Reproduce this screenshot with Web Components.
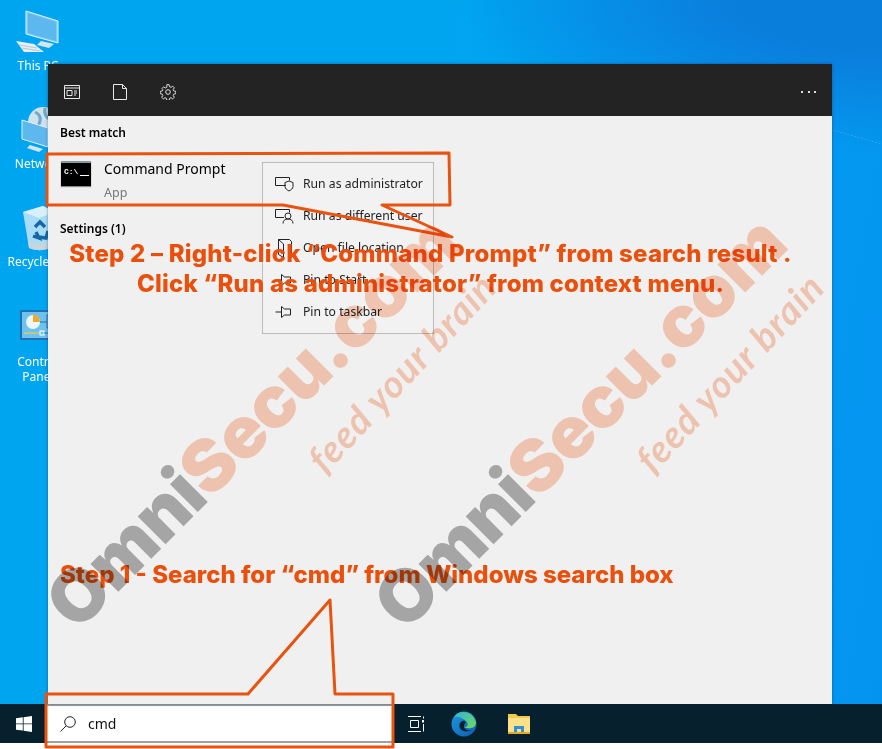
<!DOCTYPE html>
<html>
<head>
<meta charset="utf-8">
<title>Run cmd as administrator</title>
<style>
  html, body { margin: 0; padding: 0; background: #fff; }
  body { width: 882px; height: 749px; overflow: hidden; font-family: "Noto Sans", "Open Sans", sans-serif; }
</style>
</head>
<body>
<win-screen>
  <desktop-icon slot="icons" style="left:9px;top:10px" label="This PC" kind="pc"></desktop-icon>
  <desktop-icon slot="icons" style="left:10px;top:105px" label="Network" kind="net"></desktop-icon>
  <desktop-icon slot="icons" style="left:10px;top:203px" label="Recycle Bin" kind="bin"></desktop-icon>
  <desktop-icon slot="icons" style="left:9px;top:308px" label="Control Panel" kind="cp"></desktop-icon>

  <search-panel slot="panel"></search-panel>
  <task-bar slot="taskbar"></task-bar>

  <step-callouts slot="over"></step-callouts>
  <step-note slot="over" style="left:0;top:239px;width:861px;letter-spacing:.2px">Step 2 – Right-click “Command Prompt” from search result .<br>Click “Run as administrator” from context menu.</step-note>
  <step-note slot="over" style="left:60px;top:560px">Step 1 - Search for “cmd” from Windows search box</step-note>

  <omni-mark slot="over" style="left:84px;top:640px"></omni-mark>
  <omni-mark slot="over" style="left:412px;top:640px"></omni-mark>
</win-screen>

<script>
const screenTpl = document.createElement('template');
screenTpl.innerHTML = `
  <style>
    :host { display: flex; flex-direction: column; position: relative; width: 882px; height: 749px; overflow: hidden; background: #fff; }
    .desk {
      position: relative; height: 704px; box-sizing: border-box; padding: 64px 50px 0 48px; display: flex;
      background:
        linear-gradient(16deg, transparent 0 49%, rgba(255,255,255,.2) 50%, transparent 51%) 832px 122px / 50px 30px no-repeat,
        radial-gradient(ellipse 420px 150px at 100% 0, #0a7edb 0 35%, rgba(10,126,219,0) 100%),
        linear-gradient(100deg, #00a5f0 0 45%, #0494f0 100%);
    }
    ::slotted(search-panel) { position: relative; flex: 1; }
  </style>
  <div class="desk">
    <slot name="icons"></slot>
    <slot name="panel"></slot>
  </div>
  <slot name="taskbar"></slot>
  <slot name="over"></slot>
`;
class WinScreen extends HTMLElement {
  constructor() {
    super();
    this.attachShadow({ mode: 'open' }).appendChild(screenTpl.content.cloneNode(true));
  }
}

const iconArt = {
  pc: `<svg width="46" height="44" viewBox="0 0 46 44">
        <path d="M13 1 L45 11 V33 L13 24Z" fill="#7cc9f5" stroke="#dff2fd" stroke-width="1"/>
        <path d="M15 3 L43 12 V31 L15 23Z" fill="#5cb8ee"/>
        <path d="M28 31 L41 34 L36 38 L24 35Z" fill="#d6e6ef"/>
        <path d="M6 33 L24 36 L34 44 L14 44 Z" fill="#e8f0f5" transform="translate(-3,-2)"/>
        <path d="M6 35 L24 38 M8 38 L28 41" stroke="#b4c6d2" stroke-width="1"/>
      </svg>`,
  net: `<svg width="44" height="48" viewBox="0 0 44 48">
        <circle cx="28" cy="17" r="15" fill="#cfe2ee"/>
        <path d="M20 7 q8 4 4 12 t10 8 M30 3 q-2 8 6 12" stroke="#6fa9cc" stroke-width="3" fill="none"/>
        <path d="M7 15 L33 23 V42 L7 34Z" fill="#5cb8ee" stroke="#dff2fd"/>
        <path d="M15 40 L28 44 L24 47 L12 43Z" fill="#d6e6ef"/>
      </svg>`,
  bin: `<svg width="44" height="50" viewBox="0 0 44 50">
        <path d="M8 9 L28 3 L40 9 L38 44 Q26 50 14 45Z" fill="#a9dcf6"/>
        <path d="M8 9 L28 3 L40 9 L24 15Z" fill="#d9f0fb"/>
        <path d="M13 38 Q26 44 38 36 L38 44 Q26 50 14 45Z" fill="#c6d6dc"/>
        <path d="M20 24 l5 -5 l5 5 M33 28 l-2 7 l-7 -1 M21 29 l3 6 l-6 -2" stroke="#1467a8" stroke-width="3.4" fill="none"/>
      </svg>`,
  cp: `<svg width="44" height="44" viewBox="0 0 44 44">
        <rect x="6" y="2" width="38" height="30" fill="#1f73b4"/>
        <rect x="8" y="4" width="36" height="26" fill="#6ec3ee"/>
        <circle cx="19" cy="14" r="7" fill="#eef7fc"/>
        <path d="M19 14 V6.500 A7 7 0 0 1 26 14Z" fill="#f3a72b"/>
        <path d="M10 25 H26" stroke="#dcc66a" stroke-width="1.500"/>
        <rect x="26" y="23" width="4" height="4" fill="none" stroke="#fff"/>
        <path d="M26 14 H33 V7 H44 M33 14 V20 H44 M30 25 H38 V20" stroke="#1f73b4" fill="none"/>
      </svg>`
};
const labelGap = { pc: -1, net: 2, bin: 2, cp: -3 };
class DesktopIcon extends HTMLElement {
  constructor() {
    super();
    this.attachShadow({ mode: 'open' });
  }
  connectedCallback() {
    const kind = this.getAttribute('kind');
    this.shadowRoot.innerHTML = `
      <style>
        :host { position: absolute; display: flex; flex-direction: column; align-items: center; width: 58px; gap: 1px;
                color: #fff; font: 12px/15px "Noto Sans", sans-serif; text-align: center; }
        svg { display: block; margin-left: -4px; }
        .art { height: 48px; }
        .txt { margin-top: ${labelGap[kind]}px; ${kind === 'bin' ? 'white-space: nowrap;' : ''} }
      </style>
      <div class="art">${iconArt[kind]}</div>
      <div class="txt">${this.getAttribute('label')}</div>`;
  }
}

const panelTpl = document.createElement('template');
panelTpl.innerHTML = `
  <style>
    :host { display: flex; flex-direction: column; background: #f0f0f0; box-shadow: 0 0 3px rgba(0,40,90,.45); color: #000; }
    .tools { height: 52px; box-sizing: border-box; flex: none; background: #232323; display: flex; align-items: center; padding: 4px 16px 0; gap: 33px; }
    .tools svg { display: block; }
    .dots { margin-left: auto; display: flex; gap: 4.500px; }
    .dots i { width: 2px; height: 2px; background: #ddd; display: block; }
    .body { flex: 1; position: relative; padding-top: 8px; }
    h3 { margin: 0; padding-left: 12px; font: 600 12px/18px "Noto Sans", sans-serif; }
    .hit { display: flex; height: 52px; margin-top: 11px; box-sizing: border-box; padding: 5px 0 0 13px; }
    .cmd { width: 30px; height: 19px; margin-top: 3px; background: #000; border-top: 2px solid #8a969e; box-shadow: 0 1px 1px #888; flex: none; display: flex; gap: 2px; align-items: flex-start; padding-top: 4px; box-sizing: content-box; }
    .cmd b { color: #fff; font: 700 8px/9px "Liberation Mono", monospace; padding-left: 3px; }
    .cmd i { display: block; width: 9px; height: 1px; background: #fff; margin-top: 8px; }
    .names { margin-left: 13px; }
    .name { font-size: 14px; line-height: 21px; }
    .app { font-size: 12.500px; line-height: 18px; color: #777; margin-top: 5px; }
    .settings { margin-top: 15px; }
  </style>
  <div class="tools">
    <svg width="16" height="14" viewBox="0 0 16 14" fill="none" stroke="#e8e8e8">
      <path d="M.5.5h15v13H.5zM.5 3h15M3 5.500h5v5H3zM10 6h3M10 8h3M10 10h2"/>
    </svg>
    <svg width="14" height="16" viewBox="0 0 14 16" fill="none" stroke="#e8e8e8">
      <path d="M.5.5h9l4 4v11H.5zM9.500.5v4h4"/>
    </svg>
    <svg width="16" height="16" viewBox="0 0 24 24" fill="none" stroke="#e8e8e8" stroke-width="1.400">
      <circle cx="12" cy="12" r="3.500"/>
      <path d="M10.300 1h3.400l.6 3 2.200 1 2.600-1.700 2.400 2.400-1.700 2.600 1 2.200 3 .6v3.400l-3 .6-1 2.200 1.700 2.600-2.400 2.400-2.600-1.700-2.200 1-.6 3h-3.400l-.6-3-2.200-1-2.600 1.700-2.400-2.400 1.700-2.600-1-2.200-3-.6v-3.400l3-.6 1-2.200L3 6.700l2.400-2.400L8 6l2.200-1z"/>
    </svg>
    <div class="dots"><i></i><i></i><i></i></div>
  </div>
  <div class="body">
    <h3>Best match</h3>
    <div class="hit">
      <div class="cmd"><b>C:\\</b><i></i></div>
      <div class="names">
        <div class="name">Command Prompt</div>
        <div class="app">App</div>
      </div>
    </div>
    <h3 class="settings">Settings (1)</h3>
    <context-menu></context-menu>
  </div>
`;
class SearchPanel extends HTMLElement {
  constructor() {
    super();
    this.attachShadow({ mode: 'open' }).appendChild(panelTpl.content.cloneNode(true));
  }
}

const menuIcons = {
  admin: '<path d="M11 10.500H.5v-8h14v3M10 7.500l4-1.500 4 1.500v4c0 2-2 3.500-4 4.500-2-1-4-2.500-4-4.500z"/>',
  user: '<path d="M9 10.500H.5v-8h14v3"/><circle cx="13" cy="9" r="3"/><path d="M8 16.500c0-3 2-4.500 5-4.500s5 1.500 5 4.500"/>',
  folder: '<path d="M3.500 15.500V.5h11l2 2v13M3.500 15.500l5 3V5l-5-4.500"/>',
  pin: '<path d="M.5 9h6M6.500 3.500l3 2.500h6v6h-6l-3 2.500z"/>'
};
const menuTpl = document.createElement('template');
menuTpl.innerHTML = `
  <style>
    :host { position: absolute; left: 214px; top: 46px; width: 172px; box-sizing: border-box; padding: 5px 0; display: flex; flex-direction: column;
            border: 1px solid #bcbcbc; background: #f2f2f2; font: 12.200px/32px "Noto Sans", sans-serif; color: #222; }
    .row { height: 32px; display: flex; align-items: center; padding-left: 12px; gap: 9px; white-space: nowrap; }
    svg { flex: none; display: block; width: 19px; height: 19px; fill: none; stroke: #222; }
  </style>
  <div class="row"><svg viewBox="0 0 19 19">${menuIcons.admin}</svg>Run as administrator</div>
  <div class="row"><svg viewBox="0 0 19 19">${menuIcons.user}</svg>Run as different user</div>
  <div class="row"><svg viewBox="0 0 19 19">${menuIcons.folder}</svg>Open file location</div>
  <div class="row"><svg viewBox="0 0 19 19">${menuIcons.pin}</svg>Pin to Start</div>
  <div class="row"><svg viewBox="0 0 19 19">${menuIcons.pin}</svg>Pin to taskbar</div>
`;
class ContextMenu extends HTMLElement {
  constructor() {
    super();
    this.attachShadow({ mode: 'open' }).appendChild(menuTpl.content.cloneNode(true));
  }
}

const barTpl = document.createElement('template');
barTpl.innerHTML = `
  <style>
    :host { display: flex; align-items: center; height: 39px; flex: none; background: #06202e; }
    .start { width: 46px; display: flex; padding-left: 16px; box-sizing: border-box; }
    .box { width: 346px; height: 39px; box-sizing: border-box; border-top: 2px solid #a0a0a0; border-bottom: 2px solid #a0a0a0; background: #fff;
           display: flex; align-items: center; padding: 1px 0 0 14px; gap: 12px; font: 14px/20px "Noto Sans", sans-serif; color: #111; flex: none; }
    .apps { display: flex; align-items: center; margin-left: 16px; }
    svg { display: block; flex: none; }
  </style>
  <div class="start">
    <svg width="16" height="16" viewBox="0 0 16 16" fill="#fff"><path d="M0 2.300l6.800-1V7.500H0zM7.600 1.200L16 0v7.500H7.600zM0 8.300h6.800v6.300L0 13.700zM7.600 8.300H16V16l-8.400-1.200z"/></svg>
  </div>
  <div class="box">
    <svg width="16" height="16" viewBox="0 0 16 16" fill="none" stroke="#222"><circle cx="10" cy="6" r="5.300"/><path d="M6 10L.5 15.500"/></svg>
    <span>cmd</span>
  </div>
  <div class="apps">
    <svg width="16" height="16" viewBox="0 0 16 16" fill="none" stroke="#fff">
      <path d="M0 .5h13M0 15.500h13M2.500 4.500h8v7h-8z"/><path d="M14 4h2v2.500h-2z" fill="#fff" stroke="none"/><path d="M15.500 .5v2M15.500 8v7.500"/>
    </svg>
    <svg width="26" height="26" viewBox="0 0 26 26" style="margin-left:27px">
      <defs>
        <linearGradient id="eb" x1="0" y1="0" x2="1" y2="1"><stop offset="0" stop-color="#1d9ade"/><stop offset="1" stop-color="#0c5db0"/></linearGradient>
        <linearGradient id="eg" x1="0" y1="0" x2="1" y2="1"><stop offset="0" stop-color="#2cb7d8"/><stop offset="1" stop-color="#73d957"/></linearGradient>
      </defs>
      <circle cx="13" cy="13" r="12.500" fill="url(#eb)"/>
      <path d="M3 6C7-1 21-2 25 11c.6 4-3 7-8 6h-4c3-1 5-3 3-6C12 6 6 5 3 6z" fill="url(#eg)"/>
      <path d="M11.500 10c-3 1-4 5-2 8 2 3 7 3 12 1-1 0-5 1-7-1-2-1-2-4 0-6 1-1-1-3-3-2z" fill="#06202e"/>
    </svg>
    <svg width="24" height="22" viewBox="0 0 24 22" style="margin-left:30px">
      <path d="M1 1h8l2 2h12v18H1z" fill="#f2c94c"/>
      <path d="M1 5h22v16H1z" fill="#fbe28a"/>
      <path d="M7 20v-7h10v7h-3v-4h-4v4z" fill="#2f8fd8"/>
      <path d="M1 19h22v2H1z" fill="#e2a92c"/>
    </svg>
  </div>
`;
class TaskBar extends HTMLElement {
  constructor() {
    super();
    this.attachShadow({ mode: 'open' }).appendChild(barTpl.content.cloneNode(true));
  }
}

const calloutTpl = document.createElement('template');
calloutTpl.innerHTML = `
  <style>
    :host { position: absolute; left: 0; top: 0; display: block; width: 882px; height: 749px; pointer-events: none; }
    svg { display: block; }
    polygon { fill: none; stroke: #e8540f; stroke-width: 3; stroke-linejoin: round; }
  </style>
  <svg width="882" height="749">
    <polygon points="47,154 449,153 450,205 382,205 452,237 283,205 47,205"/>
    <polygon points="46,694 248,694 330,600 335,694 393,694 393,747 46,747"/>
  </svg>
`;
class StepCallouts extends HTMLElement {
  constructor() {
    super();
    this.attachShadow({ mode: 'open' }).appendChild(calloutTpl.content.cloneNode(true));
  }
}

const noteTpl = document.createElement('template');
noteTpl.innerHTML = `
  <style>
    :host { position: absolute; display: block; color: #ea500c; font: 800 24px/30px Inter, "Liberation Sans", sans-serif; text-align: center; white-space: nowrap; }
  </style>
  <slot></slot>
`;
class StepNote extends HTMLElement {
  constructor() {
    super();
    this.attachShadow({ mode: 'open' }).appendChild(noteTpl.content.cloneNode(true));
  }
}

const markTpl = document.createElement('template');
markTpl.innerHTML = `
  <style>
    :host { position: absolute; display: block; width: 0; height: 0; mix-blend-mode: multiply; pointer-events: none; }
    .word { position: absolute; left: 0; bottom: 0; transform-origin: 0 100%; transform: rotate(-45deg); white-space: nowrap;
            font: 900 72px/1 Inter, "Liberation Sans", sans-serif; letter-spacing: -1px; }
    .o { color: #b0b0b0; }
    .s { color: #fcd0bb; }
    .tag { position: absolute; left: 244px; bottom: 162px; transform-origin: 0 100%; transform: rotate(-47deg); white-space: nowrap;
           font: italic 700 38px/1 Lato, sans-serif; color: #fcd0bb; letter-spacing: 1px; }
  </style>
  <div class="word"><span class="o">Omni</span><span class="s">Secu.com</span></div>
  <div class="tag">feed your brain</div>
`;
class OmniMark extends HTMLElement {
  constructor() {
    super();
    this.attachShadow({ mode: 'open' }).appendChild(markTpl.content.cloneNode(true));
  }
}

customElements.define('win-screen', WinScreen);
customElements.define('desktop-icon', DesktopIcon);
customElements.define('search-panel', SearchPanel);
customElements.define('context-menu', ContextMenu);
customElements.define('task-bar', TaskBar);
customElements.define('step-callouts', StepCallouts);
customElements.define('step-note', StepNote);
customElements.define('omni-mark', OmniMark);
</script>
</body>
</html>
